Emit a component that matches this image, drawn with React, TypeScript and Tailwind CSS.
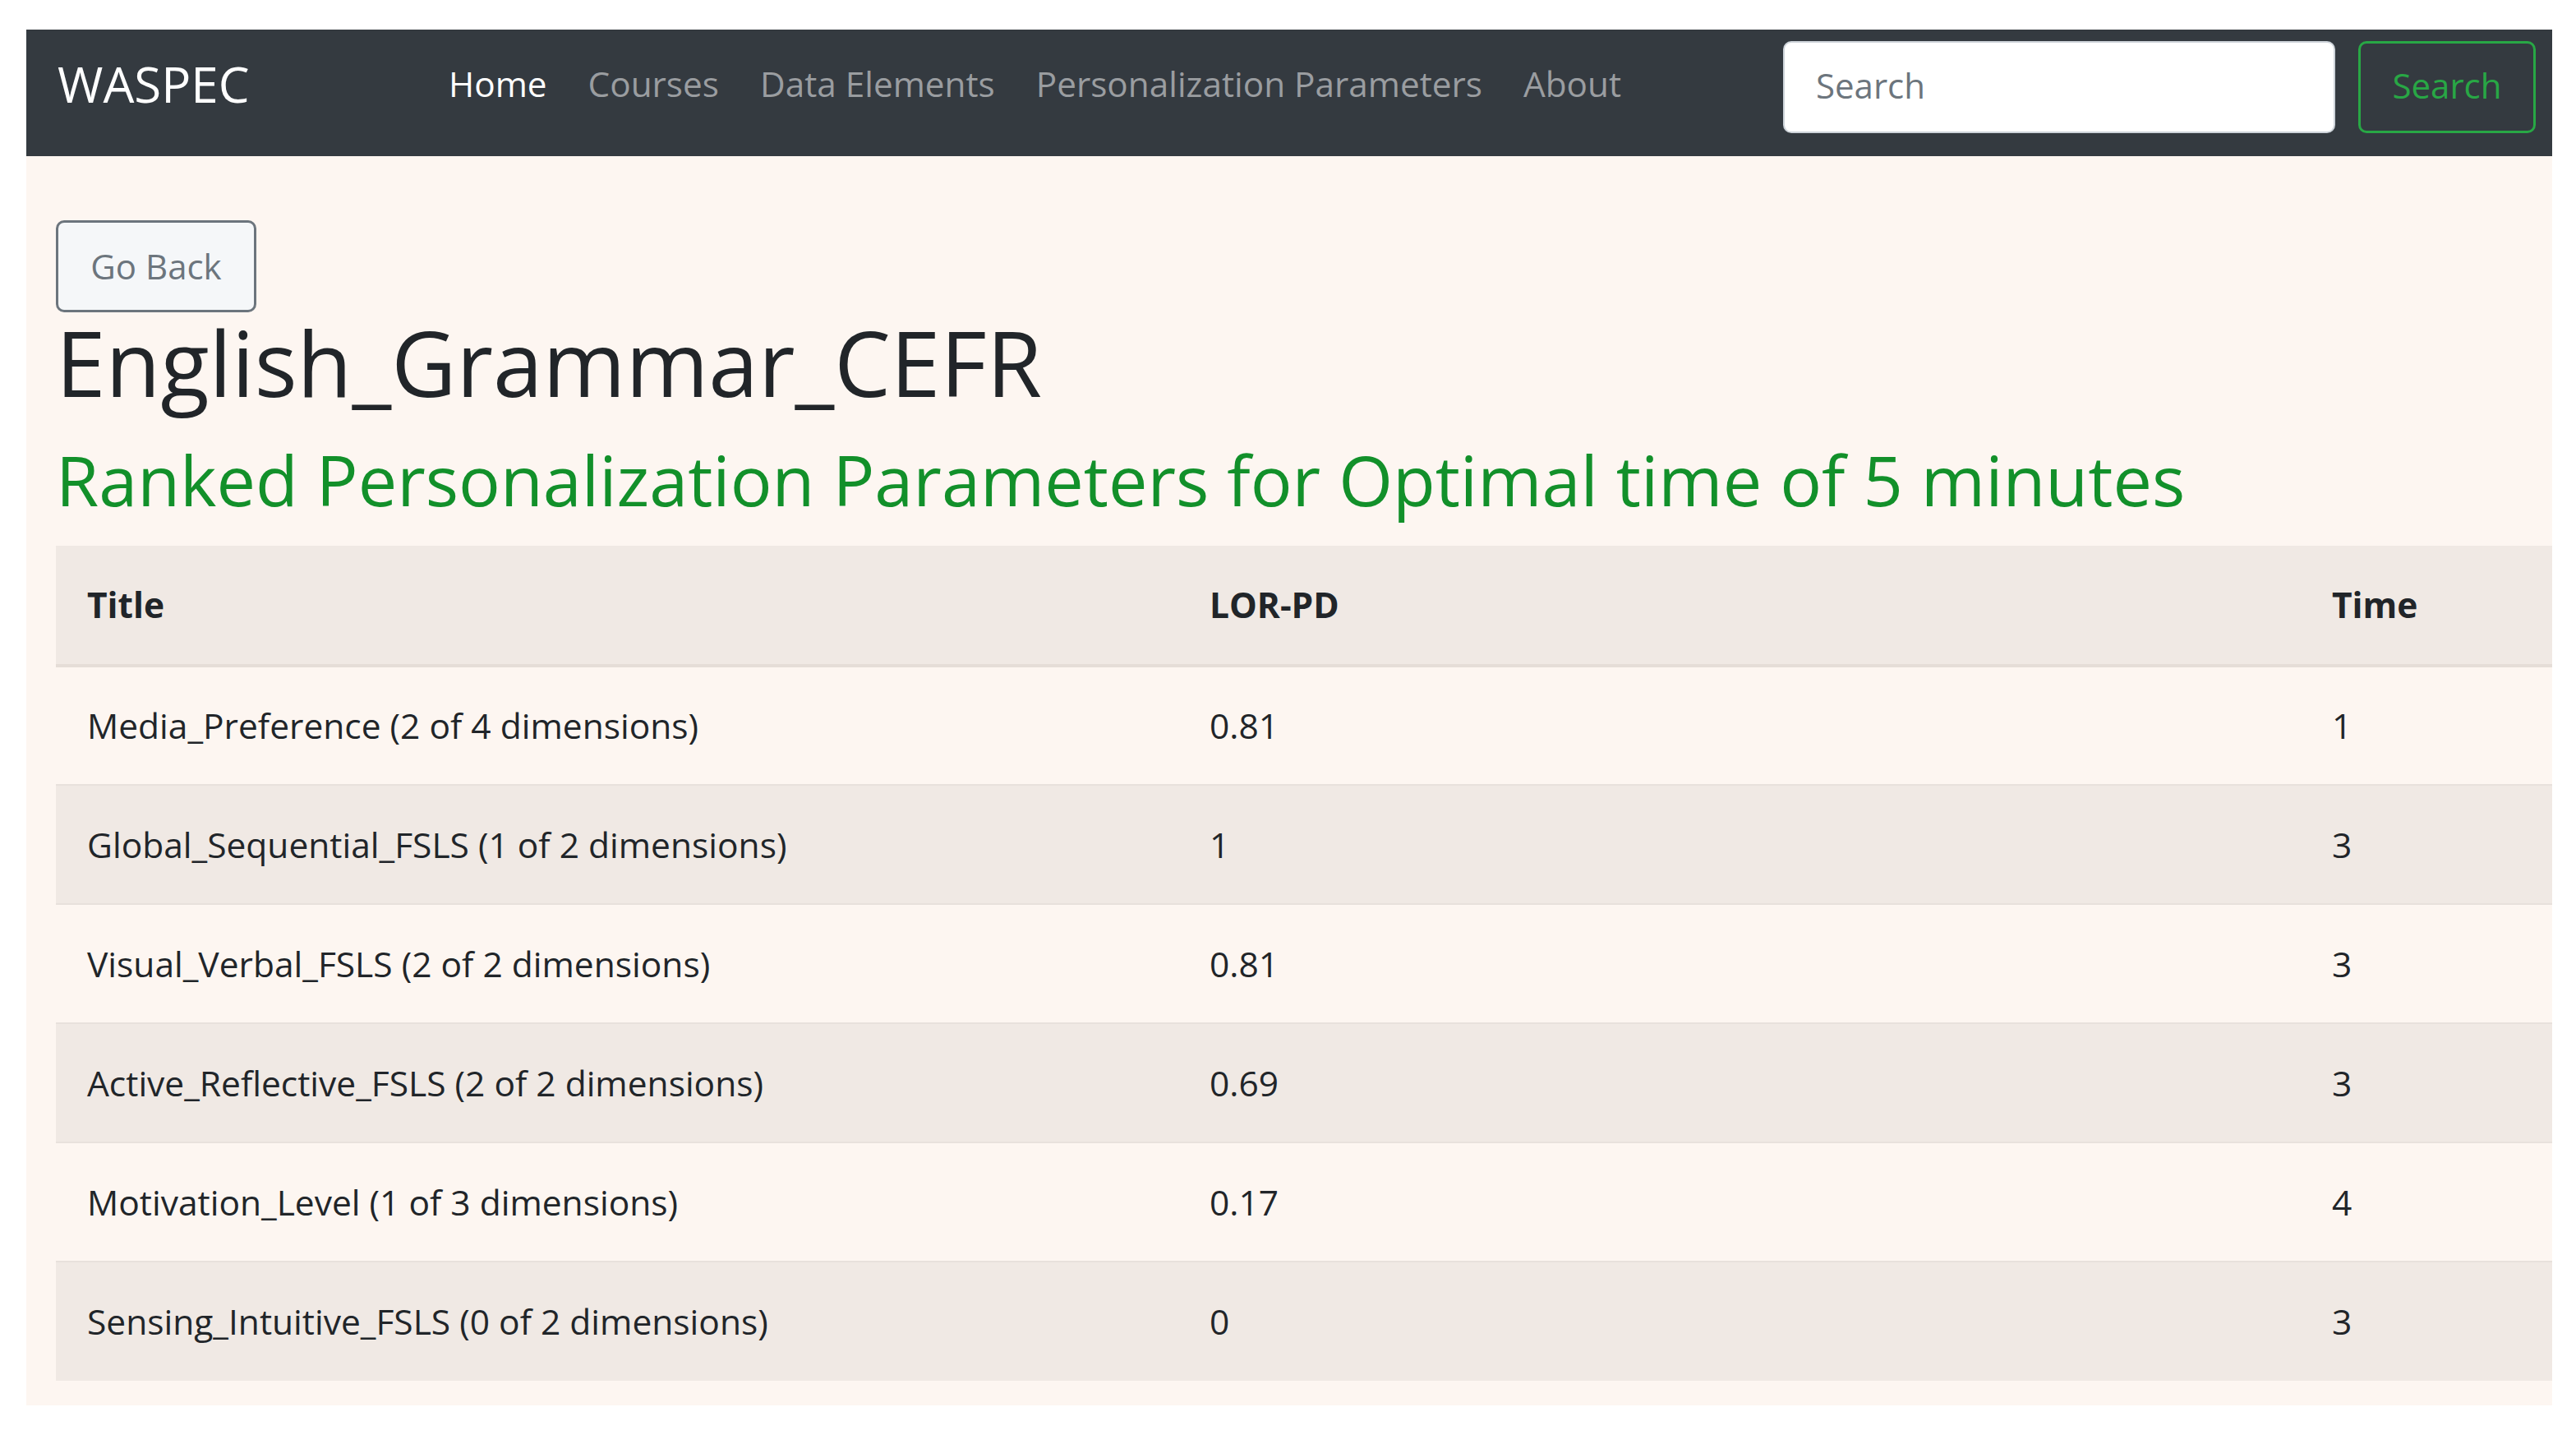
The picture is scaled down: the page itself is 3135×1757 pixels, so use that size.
import React from "react";

const rows = [
  { title: "Media_Preference (2 of 4 dimensions)", lor: "0.81", time: "1" },
  { title: "Global_Sequential_FSLS (1 of 2 dimensions)", lor: "1", time: "3" },
  { title: "Visual_Verbal_FSLS (2 of 2 dimensions)", lor: "0.81", time: "3" },
  { title: "Active_Reflective_FSLS (2 of 2 dimensions)", lor: "0.69", time: "3" },
  { title: "Motivation_Level (1 of 3 dimensions)", lor: "0.17", time: "4" },
  { title: "Sensing_Intuitive_FSLS (0 of 2 dimensions)", lor: "0", time: "3" },
];

const links = ["Home", "Courses", "Data Elements", "Personalization Parameters", "About"];

export default function App() {
  return (
    <div
      className="min-h-screen bg-white pt-[36px] pl-[32px] pr-[29px]"
      style={{ fontFamily: '"Open Sans", "Noto Sans", sans-serif' }}
    >
      <nav className="flex h-[154px] items-center bg-[#343a40] pb-[14px] pl-[38px] pr-[20px]">
        <div className="mb-[8px] w-[451px] text-[60px] leading-none text-white">WASPEC</div>
        <ul className="mb-[8px] flex items-center">
          {links.map((l, i) => (
            <li
              key={l}
              className={`px-[25px] text-[42.3px] leading-none ${i === 0 ? "text-white" : "text-[#9a9da0]"}`}
            >
              {l}
            </li>
          ))}
        </ul>
        <div className="ml-auto flex items-center gap-[28px]">
          <div className="flex h-[112px] w-[672px] items-center rounded-[10px] border-2 border-[#ced4da] bg-white pb-[6px] pl-[38px] text-[42px] text-[#6c757d]">
            Search
          </div>
          <button className="flex h-[112px] w-[216px] items-center justify-center rounded-[10px] border-[3px] border-[#28a745] pb-[6px] text-[42px] text-[#28a745]">
            Search
          </button>
        </div>
      </nav>
      <main className="bg-[#fdf6f1] pb-[30px] pl-[36px] pt-[78px]">
        <button className="flex h-[112px] w-[244px] items-center justify-center rounded-[10px] border-[3px] border-[#6c757d] bg-[#f5f7f9] pb-[2px] text-[42px] text-[#6c757d]">
          Go Back
        </button>
        <h1 className="-mt-[4px] text-[109px] leading-[1.2] text-[#212529]">English_Grammar_CEFR</h1>
        <h2 className="mt-[26px] text-[84.6px] leading-[1.2] text-[#12902a]">
          Ranked Personalization Parameters for Optimal time of 5 minutes
        </h2>
        <table className="mt-[30px] w-full border-collapse text-[42.5px] text-[#212529]">
          <thead>
            <tr className="h-[146px] border-b-[4px] border-[#e5ddd7] bg-[#f0e9e4]">
              <th className="w-[1366px] pl-[38px] text-left font-bold">Title</th>
              <th className="w-[1366px] pl-[38px] text-left font-bold">LOR-PD</th>
              <th className="pl-[38px] text-left font-bold">Time</th>
            </tr>
          </thead>
          <tbody>
            {rows.map((r, i) => (
              <tr
                key={r.title}
                className={`h-[145px] border-t-2 border-[#e8e1dc] ${i % 2 === 1 ? "bg-[#f0e9e4]" : "bg-[#fdf6f1]"}`}
              >
                <td className="pl-[38px]">{r.title}</td>
                <td className="pl-[38px]">{r.lor}</td>
                <td className="pl-[38px]">{r.time}</td>
              </tr>
            ))}
          </tbody>
        </table>
      </main>
    </div>
  );
}
